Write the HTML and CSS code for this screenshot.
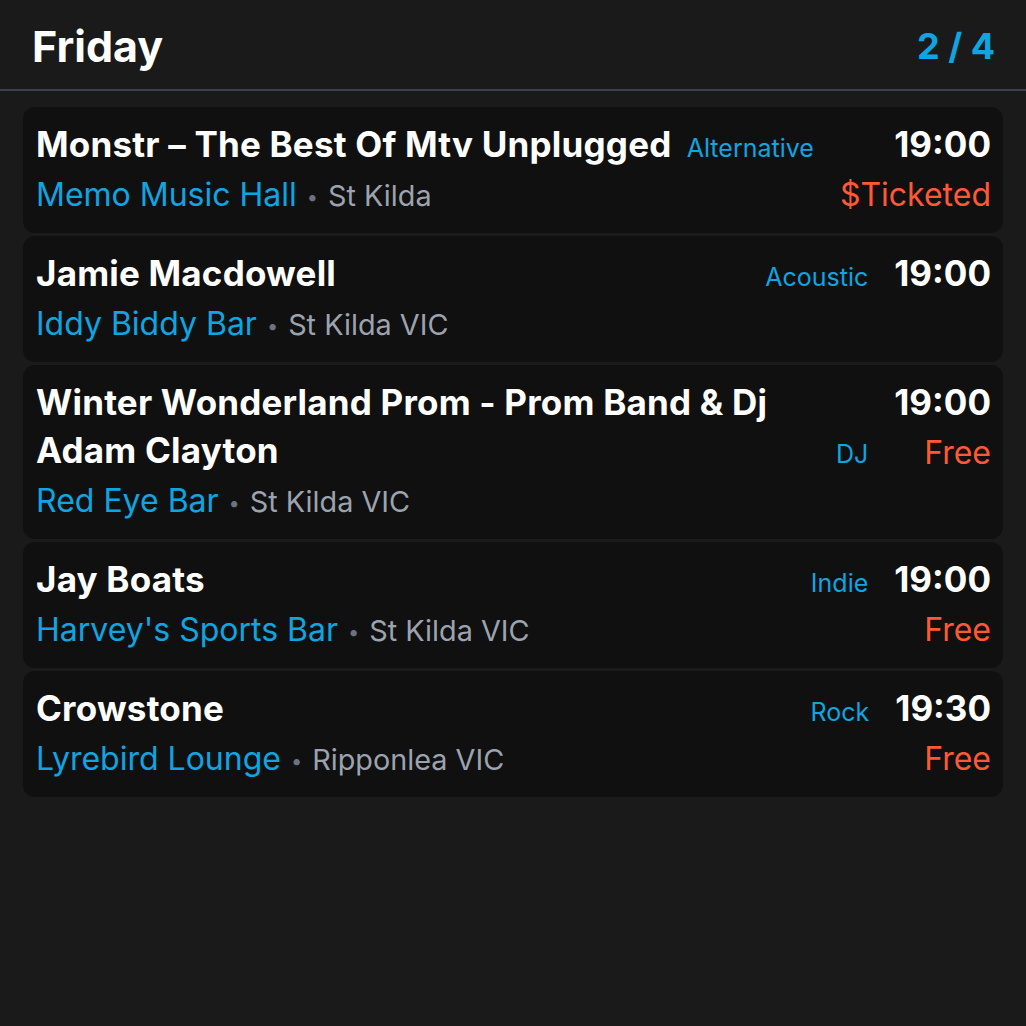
FILE: index.html
```html
<!DOCTYPE html>
<html lang="en">
<head>
<meta charset="utf-8">
<title>Friday</title>
<link rel="stylesheet" href="styles.css">
</head>
<body>
<header class="day-header">
  <h1 class="day-title">Friday</h1>
  <div class="day-page">2 / 4</div>
</header>
<main class="events">
  <article class="event">
    <div class="event-main">
      <div class="event-top">
        <h2 class="event-title">Monstr – The Best Of Mtv Unplugged</h2>
        <span class="event-genre">Alternative</span>
      </div>
      <div class="event-venue"><span class="venue-name">Memo Music Hall</span><span class="venue-dot">•</span><span class="venue-loc">St Kilda</span></div>
    </div>
    <div class="event-side">
      <div class="event-time">19:00</div>
      <div class="event-price">$Ticketed</div>
    </div>
  </article>
  <article class="event">
    <div class="event-main">
      <div class="event-top">
        <h2 class="event-title">Jamie Macdowell</h2>
        <span class="event-genre">Acoustic</span>
      </div>
      <div class="event-venue"><span class="venue-name">Iddy Biddy Bar</span><span class="venue-dot">•</span><span class="venue-loc">St Kilda VIC</span></div>
    </div>
    <div class="event-side">
      <div class="event-time">19:00</div>
    </div>
  </article>
  <article class="event">
    <div class="event-main">
      <div class="event-top">
        <h2 class="event-title">Winter Wonderland Prom - Prom Band &amp; Dj Adam Clayton</h2>
        <span class="event-genre">DJ</span>
      </div>
      <div class="event-venue"><span class="venue-name">Red Eye Bar</span><span class="venue-dot">•</span><span class="venue-loc">St Kilda VIC</span></div>
    </div>
    <div class="event-side">
      <div class="event-time">19:00</div>
      <div class="event-price">Free</div>
    </div>
  </article>
  <article class="event">
    <div class="event-main">
      <div class="event-top">
        <h2 class="event-title">Jay Boats</h2>
        <span class="event-genre">Indie</span>
      </div>
      <div class="event-venue"><span class="venue-name">Harvey's Sports Bar</span><span class="venue-dot">•</span><span class="venue-loc">St Kilda VIC</span></div>
    </div>
    <div class="event-side">
      <div class="event-time">19:00</div>
      <div class="event-price">Free</div>
    </div>
  </article>
  <article class="event">
    <div class="event-main">
      <div class="event-top">
        <h2 class="event-title">Crowstone</h2>
        <span class="event-genre">Rock</span>
      </div>
      <div class="event-venue"><span class="venue-name">Lyrebird Lounge</span><span class="venue-dot">•</span><span class="venue-loc">Ripponlea VIC</span></div>
    </div>
    <div class="event-side">
      <div class="event-time">19:30</div>
      <div class="event-price">Free</div>
    </div>
  </article>
</main>
</body>
</html>
```
FILE: styles.css
```css
* { box-sizing: border-box; }
html, body {
  margin: 0;
  padding: 0;
  background: #1a1a1a;
  color: #ffffff;
  font-family: Inter, "Noto Sans", "Liberation Sans", sans-serif;
}
body { min-height: 1026px; }

.day-header {
  display: flex;
  justify-content: space-between;
  align-items: center;
  height: 91px;
  padding: 3px 31px 0 32px;
  border-bottom: 2px solid #3a404c;
}
.day-title {
  margin: 0;
  font-size: 43px;
  font-weight: 700;
}
.day-page {
  font-size: 36px;
  font-weight: 700;
  color: #0ea5e0;
}

.events {
  display: flex;
  flex-direction: column;
  gap: 3px;
  padding: 16px 23px;
}
.event {
  display: flex;
  align-items: flex-start;
  gap: 26px;
  background: #101010;
  border-radius: 12px;
  padding: 13px 12px 12px 13px;
}
.event-main {
  flex: 1;
  min-width: 0;
}
.event-top {
  display: flex;
  align-items: last baseline;
  gap: 12px;
}
.event-title {
  flex: 1;
  margin: 0;
  font-size: 35px;
  font-weight: 700;
  line-height: 48px;
  letter-spacing: 0.2px;
}
.event-genre {
  font-size: 25px;
  line-height: 1;
  color: #0ea5e0;
  white-space: nowrap;
}
.event-venue {
  font-size: 32px;
  line-height: 53px;
  white-space: nowrap;
}
.venue-name { color: #0ea5e0; }
.venue-dot {
  font-size: 20px;
  line-height: 1;
  color: #6b7280;
  margin: 0 10px;
  vertical-align: 2px;
}
.venue-loc {
  font-size: 28.8px;
  line-height: 1;
  color: #9ca3af;
}
.event-side {
  display: flex;
  flex-direction: column;
  align-items: flex-end;
  text-align: right;
}
.event-time {
  font-size: 35px;
  font-weight: 700;
  line-height: 48px;
}
.event-price {
  font-size: 32px;
  line-height: 53px;
  color: #ff5836;
}
```
